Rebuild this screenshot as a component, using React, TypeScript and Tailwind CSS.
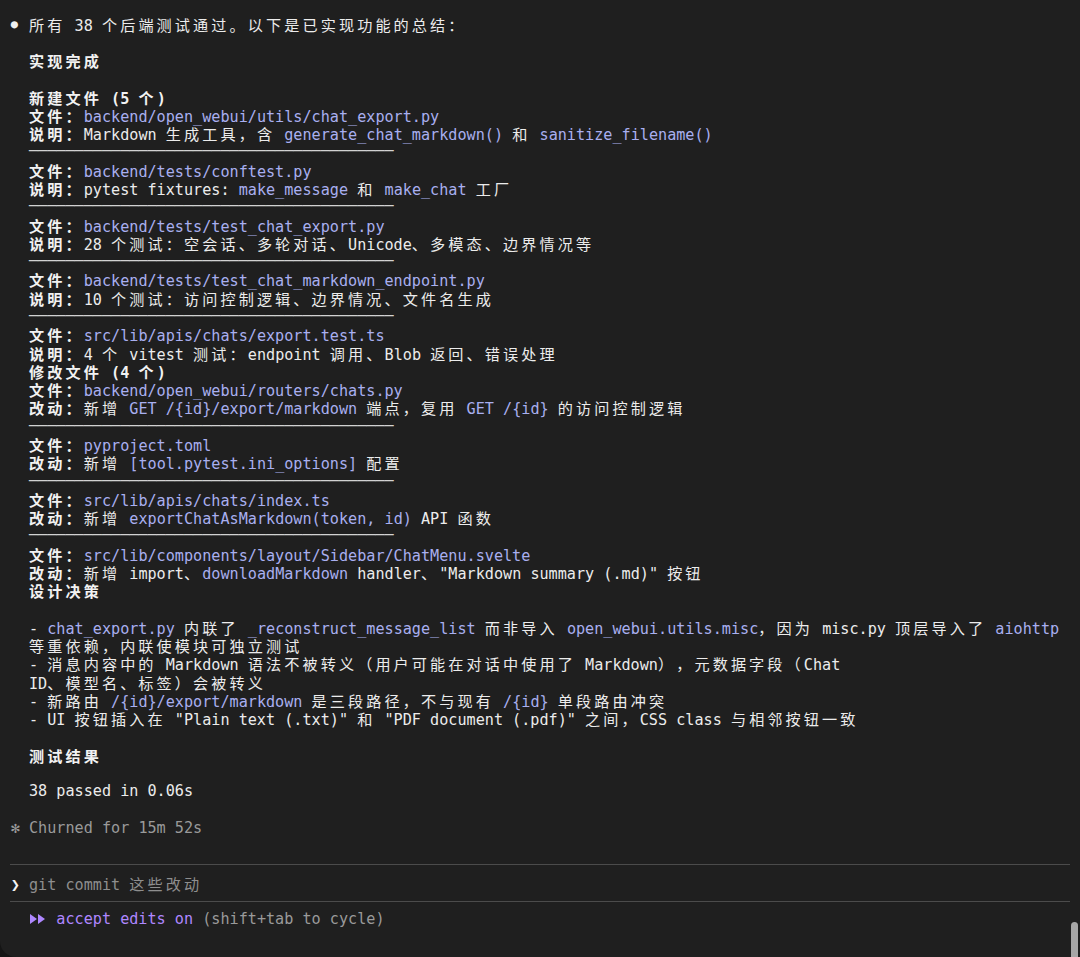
import React from 'react';

const MONO = "[font-family:'DejaVu_Sans_Mono','Noto_Sans_CJK_SC',monospace]";
const CJK = "[font-family:'Noto_Sans_CJK_SC',sans-serif] tracking-[3.09px]";

const isWide = (ch: string) => /[\u2E80-\u9FFF\u3000-\u303F\uFF00-\uFFEF]/.test(ch);

type Seg = { t: string; k: 'n' | 'b' | 'c' | 's' | 'g' };

const colorOf: Record<Seg['k'], string> = {
  n: 'text-[#ececec]',
  b: 'text-[#f2f2f2] font-bold',
  c: 'text-[#a9aff0]',
  s: 'text-[#d2d2d2]',
  g: 'text-[#9a9a9a]',
};

function Runs({ seg }: { seg: Seg }) {
  const parts: { t: string; w: boolean }[] = [];
  for (const ch of seg.t) {
    const w = isWide(ch);
    const last = parts[parts.length - 1];
    if (last && last.w === w) last.t += ch;
    else parts.push({ t: ch, w });
  }
  const col = colorOf[seg.k];
  return (
    <>
      {parts.map((p, i) =>
        p.w ? (
          <span key={i} className={`${col} ${CJK}`}>
            {p.t}
          </span>
        ) : (
          <span key={i} className={col}>
            {p.t}
          </span>
        )
      )}
    </>
  );
}

function parse(line: string): Seg[] {
  if (line === 'SEP') return [{ t: '  ', k: 'n' }, { t: '─'.repeat(40), k: 's' }];
  return line
    .split(/(\*\*[^*]+\*\*|`[^`]+`)/)
    .filter(Boolean)
    .map((tok) =>
      tok.startsWith('**')
        ? { t: tok.slice(2, -2), k: 'b' as const }
        : tok.startsWith('`')
        ? { t: tok.slice(1, -1), k: 'c' as const }
        : { t: tok, k: 'n' as const }
    );
}

const LINES: string[] = [
  '',
  '  **实现完成**',
  '',
  '  **新建文件 (5 个)**',
  '  **文件：**`backend/open_webui/utils/chat_export.py`',
  '  **说明：**Markdown 生成工具，含 `generate_chat_markdown()` 和 `sanitize_filename()`',
  'SEP',
  '  **文件：**`backend/tests/conftest.py`',
  '  **说明：**pytest fixtures: `make_message` 和 `make_chat` 工厂',
  'SEP',
  '  **文件：**`backend/tests/test_chat_export.py`',
  '  **说明：**28 个测试：空会话、多轮对话、Unicode、多模态、边界情况等',
  'SEP',
  '  **文件：**`backend/tests/test_chat_markdown_endpoint.py`',
  '  **说明：**10 个测试：访问控制逻辑、边界情况、文件名生成',
  'SEP',
  '  **文件：**`src/lib/apis/chats/export.test.ts`',
  '  **说明：**4 个 vitest 测试：endpoint 调用、Blob 返回、错误处理',
  '  **修改文件 (4 个)**',
  '  **文件：**`backend/open_webui/routers/chats.py`',
  '  **改动：**新增 `GET /{id}/export/markdown` 端点，复用 `GET /{id}` 的访问控制逻辑',
  'SEP',
  '  **文件：**`pyproject.toml`',
  '  **改动：**新增 `[tool.pytest.ini_options]` 配置',
  'SEP',
  '  **文件：**`src/lib/apis/chats/index.ts`',
  '  **改动：**新增 `exportChatAsMarkdown(token, id)` API 函数',
  'SEP',
  '  **文件：**`src/lib/components/layout/Sidebar/ChatMenu.svelte`',
  '  **改动：**新增 import、`downloadMarkdown` handler、"Markdown summary (.md)" 按钮',
  '  **设计决策**',
  '',
  '  - `chat_export.py` 内联了 `_reconstruct_message_list` 而非导入 `open_webui.utils.misc`，因为 misc.py 顶层导入了 `aiohttp`',
  '  等重依赖，内联使模块可独立测试',
  '  - 消息内容中的 Markdown 语法不被转义（用户可能在对话中使用了 Markdown），元数据字段（Chat',
  '  ID、模型名、标签）会被转义',
  '  - 新路由 `/{id}/export/markdown` 是三段路径，不与现有 `/{id}` 单段路由冲突',
  '  - UI 按钮插入在 "Plain text (.txt)" 和 "PDF document (.pdf)" 之间，CSS class 与相邻按钮一致',
  '',
  '  **测试结果**',
  '',
  '  38 passed in 0.06s',
  '',
];

function Line({ children }: { children?: React.ReactNode }) {
  return <div className="h-[18.29px] leading-[18.29px] whitespace-pre">{children}</div>;
}

function Rule() {
  return (
    <div className="h-[18.29px] flex items-center">
      <div className="w-[1060px] h-px bg-[#4b4b4b] -ml-[1px]" />
    </div>
  );
}

export default function App() {
  return (
    <div className="w-[1080px] h-[957px] bg-[#151515] overflow-hidden">
      <div
        className={`relative w-[1080px] h-[957px] bg-[#1f1f1f] rounded-bl-[16px] pt-[14.5px] pl-[10.76px] ${MONO} text-[15.15px] [text-spacing-trim:space-all] [text-autospace:no-autospace]`}
      >
        <Line>
          <span className="inline-block w-[18.24px] text-[12px] text-[#f0f0f0] align-top">●</span>
          {parse('所有 38 个后端测试通过。以下是已实现功能的总结：').map((s, i) => (
            <Runs key={i} seg={s} />
          ))}
        </Line>
        {LINES.map((l, idx) => (
          <Line key={idx}>
            {parse(l).map((s, i) => (
              <Runs key={i} seg={s} />
            ))}
          </Line>
        ))}
        <Line>
          <span className="text-[#9a9a9a]">✻</span>
          <span className="text-[#9a9a9a]"> Churned for 15m 52s</span>
        </Line>
        <Line />
        <Rule />
        <Line>
          <span className="text-[#f4f4f4] font-bold">❯</span>
          <span className="text-[#8e8e8e]"> git commit </span>
          <span className={`text-[#8e8e8e] ${CJK}`}>这些改动</span>
        </Line>
        <Rule />
        <Line>
          <span className="inline-block w-[18.24px]" />
          <span className="inline-block w-[18.24px] h-[18.29px] align-top">
            <svg width="18" height="18" viewBox="0 0 18 18" className="block">
              <polygon points="1,4 8,9 1,14" fill="#af87ff" />
              <polygon points="9,4 16,9 9,14" fill="#af87ff" />
            </svg>
          </span>
          <span className="text-[#af87ff]"> accept edits on</span>
          <span className="text-[#9a9a9a]"> (shift+tab to cycle)</span>
        </Line>
        <div className="absolute left-[1071px] top-[922px] w-[7px] h-[42px] rounded-full bg-[#a6a6a6]" />
      </div>
    </div>
  );
}
